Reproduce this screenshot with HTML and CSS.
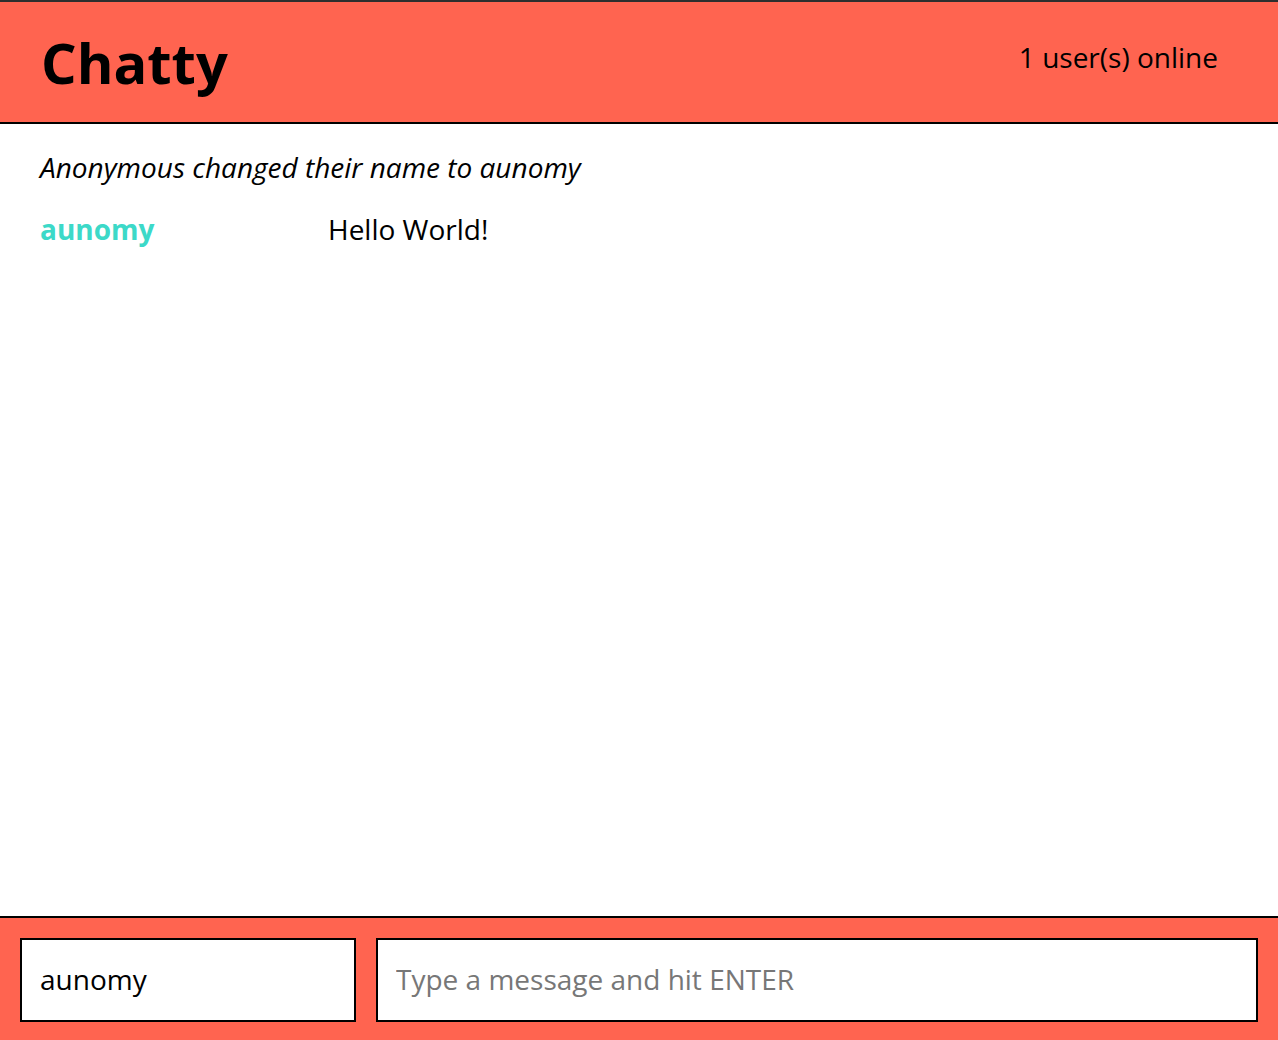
FILE: index.html
```html
<!DOCTYPE html>
<html>
<head>
<meta charset="utf-8">
<link rel="stylesheet" href="styles.css">
</head>
<body>
<div class="app">
  <header class="navbar">
    <h1 class="brand">Chatty</h1>
    <span class="online">1 user(s) online</span>
  </header>
  <main class="messages">
    <div class="notice">Anonymous changed their name to aunomy</div>
    <div class="message">
      <span class="username">aunomy</span>
      <span class="content">Hello World!</span>
    </div>
  </main>
  <footer class="chatbar">
    <input class="name-input" type="text" value="aunomy">
    <input class="msg-input" type="text" placeholder="Type a message and hit ENTER">
  </footer>
</div>
</body>
</html>
```
FILE: styles.css
```css
html, body {
  margin: 0;
  padding: 0;
  height: 100%;
}
body {
  font-family: "Open Sans", sans-serif;
  color: #000;
  background: #fff;
}
.app {
  display: flex;
  flex-direction: column;
  height: 1040px;
}
.navbar {
  display: flex;
  align-items: center;
  justify-content: space-between;
  box-sizing: border-box;
  height: 124px;
  padding: 0 60px 0 41px;
  background: #ff6450;
  border-top: 2px solid #2e2e2e;
  border-bottom: 2px solid #000;
}
.brand {
  margin: 0;
  font-size: 56px;
  font-weight: 700;
  line-height: 1;
}
.online {
  font-size: 28px;
  margin-top: -10px;
}
.messages {
  flex: 1;
  padding: 23px 40px 0 40px;
}
.notice {
  font-style: italic;
  font-size: 28px;
  line-height: 40px;
}
.message {
  display: flex;
  margin-top: 22px;
  font-size: 28px;
  line-height: 40px;
}
.username {
  width: 288px;
  color: #3cd9c8;
  font-weight: 700;
}
.content {
  flex: 1;
}
.chatbar {
  display: flex;
  gap: 20px;
  box-sizing: border-box;
  height: 124px;
  padding: 20px 20px 18px 20px;
  background: #ff6450;
  border-top: 2px solid #000;
}
.chatbar input {
  box-sizing: border-box;
  height: 84px;
  border: 2px solid #000;
  border-radius: 0;
  background: #fff;
  font-family: "Open Sans", sans-serif;
  font-size: 28px;
  padding: 0 18px 2px 18px;
  color: #000;
  outline: none;
}
.chatbar input::placeholder {
  color: #777;
}
.name-input {
  width: 336px;
}
.msg-input {
  flex: 1;
}
```
